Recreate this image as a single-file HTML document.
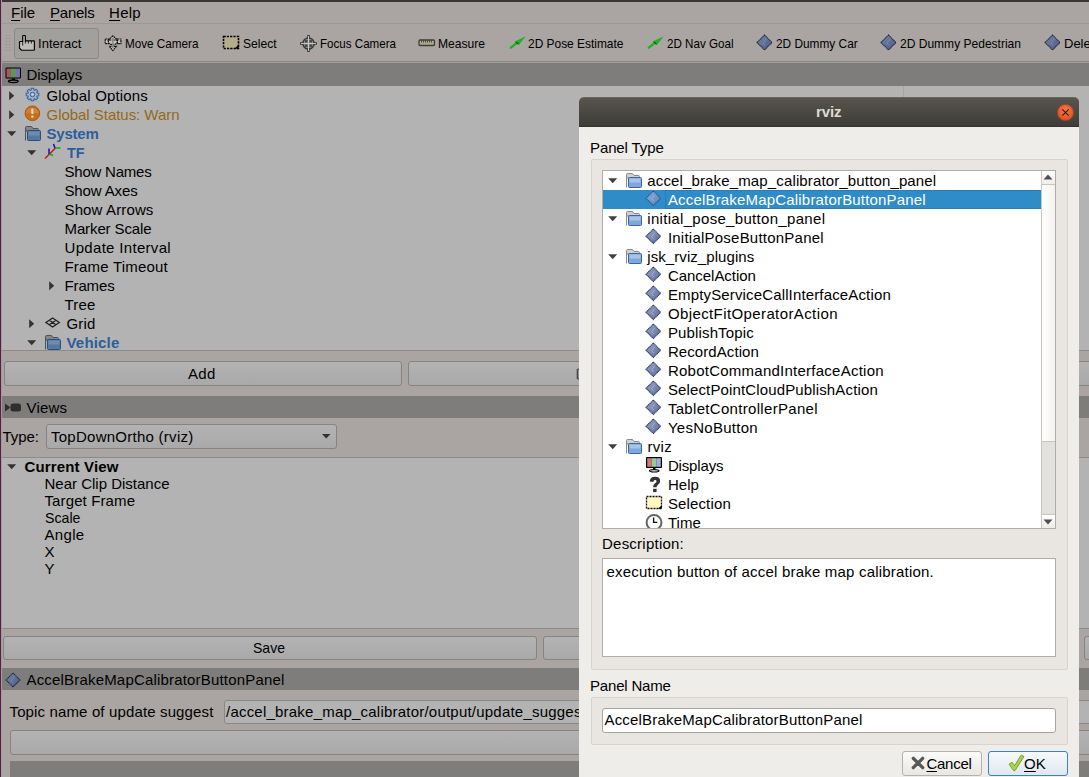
<!DOCTYPE html>
<html><head><meta charset="utf-8"><style>
html,body{margin:0;padding:0;width:1089px;height:777px;overflow:hidden;position:relative;background:#b3b3b3;font-family:'Liberation Sans', sans-serif;}
div{box-sizing:border-box;}
svg{position:absolute;overflow:visible}
</style></head><body>
<div style="position:absolute;left:0px;top:0px;width:1089px;height:2px;background:#383734"></div>
<div style="position:absolute;left:0px;top:2px;width:1089px;height:21px;background:#aaa5a2"></div>
<div style="position:absolute;left:0px;top:23px;width:1089px;height:1px;background:#9c9994"></div>
<div style="position:absolute;left:0px;top:24px;width:1089px;height:37px;background:#aaa5a2"></div>
<div style="position:absolute;left:0px;top:61px;width:1089px;height:1px;background:#8a8783"></div>
<div style="position:absolute;left:0px;top:62px;width:1089px;height:1px;background:#a39f9a"></div>
<div style="position:absolute;left:0px;top:0px;width:1px;height:777px;background:#5c1a45"></div>
<div style="position:absolute;left:1px;top:0px;width:1px;height:777px;background:#a09e9b"></div>
<div style="position:absolute;left:11.00px;top:5.25px;font-size:15px;line-height:15px;font-weight:400;color:#000;letter-spacing:-0.043px;white-space:pre;"><u style="text-decoration:underline;text-underline-offset:2px">F</u>ile</div>
<div style="position:absolute;left:50.00px;top:5.25px;font-size:15px;line-height:15px;font-weight:400;color:#000;letter-spacing:-0.229px;white-space:pre;"><u style="text-decoration:underline;text-underline-offset:2px">P</u>anels</div>
<div style="position:absolute;left:109.00px;top:5.25px;font-size:15px;line-height:15px;font-weight:400;color:#000;letter-spacing:0.285px;white-space:pre;"><u style="text-decoration:underline;text-underline-offset:2px">H</u>elp</div>
<div style="position:absolute;left:6px;top:35px;width:1px;height:1px;background:#8d8a86"></div>
<div style="position:absolute;left:9px;top:35px;width:1px;height:1px;background:#8d8a86"></div>
<div style="position:absolute;left:6px;top:38px;width:1px;height:1px;background:#8d8a86"></div>
<div style="position:absolute;left:9px;top:38px;width:1px;height:1px;background:#8d8a86"></div>
<div style="position:absolute;left:6px;top:41px;width:1px;height:1px;background:#8d8a86"></div>
<div style="position:absolute;left:9px;top:41px;width:1px;height:1px;background:#8d8a86"></div>
<div style="position:absolute;left:6px;top:44px;width:1px;height:1px;background:#8d8a86"></div>
<div style="position:absolute;left:9px;top:44px;width:1px;height:1px;background:#8d8a86"></div>
<div style="position:absolute;left:6px;top:47px;width:1px;height:1px;background:#8d8a86"></div>
<div style="position:absolute;left:9px;top:47px;width:1px;height:1px;background:#8d8a86"></div>
<div style="position:absolute;left:6px;top:50px;width:1px;height:1px;background:#8d8a86"></div>
<div style="position:absolute;left:9px;top:50px;width:1px;height:1px;background:#8d8a86"></div>
<div style="position:absolute;left:14px;top:28px;width:85px;height:31px;background:#a2a09d;border:1px solid #8a8784;border-radius:3px"></div>
<div style="position:absolute;left:38.00px;top:36.95px;font-size:13px;line-height:13px;font-weight:400;color:#000;letter-spacing:0.018px;white-space:pre;">Interact</div>
<div style="position:absolute;left:124.50px;top:36.95px;font-size:13px;line-height:13px;font-weight:400;color:#000;letter-spacing:0.000px;white-space:pre;transform:scaleX(0.9003);transform-origin:0 0;">Move Camera</div>
<div style="position:absolute;left:242.50px;top:36.95px;font-size:13px;line-height:13px;font-weight:400;color:#000;letter-spacing:0.000px;white-space:pre;transform:scaleX(0.9297);transform-origin:0 0;">Select</div>
<div style="position:absolute;left:320.00px;top:36.95px;font-size:13px;line-height:13px;font-weight:400;color:#000;letter-spacing:0.000px;white-space:pre;transform:scaleX(0.8915);transform-origin:0 0;">Focus Camera</div>
<div style="position:absolute;left:438.00px;top:36.95px;font-size:13px;line-height:13px;font-weight:400;color:#000;letter-spacing:0.000px;white-space:pre;transform:scaleX(0.9293);transform-origin:0 0;">Measure</div>
<div style="position:absolute;left:528.00px;top:36.95px;font-size:13px;line-height:13px;font-weight:400;color:#000;letter-spacing:0.000px;white-space:pre;transform:scaleX(0.9169);transform-origin:0 0;">2D Pose Estimate</div>
<div style="position:absolute;left:666.50px;top:36.95px;font-size:13px;line-height:13px;font-weight:400;color:#000;letter-spacing:0.000px;white-space:pre;transform:scaleX(0.8936);transform-origin:0 0;">2D Nav Goal</div>
<div style="position:absolute;left:776.00px;top:36.95px;font-size:13px;line-height:13px;font-weight:400;color:#000;letter-spacing:0.000px;white-space:pre;transform:scaleX(0.9121);transform-origin:0 0;">2D Dummy Car</div>
<div style="position:absolute;left:900.00px;top:36.95px;font-size:13px;line-height:13px;font-weight:400;color:#000;letter-spacing:0.000px;white-space:pre;transform:scaleX(0.9252);transform-origin:0 0;">2D Dummy Pedestrian</div>
<div style="position:absolute;left:1064.00px;top:36.95px;font-size:13px;line-height:13px;font-weight:400;color:#000;letter-spacing:0.000px;white-space:pre;">Delete All Objects</div>
<div style="position:absolute;left:2px;top:63px;width:1087px;height:23px;background:#7f7d7b"></div>
<div style="position:absolute;left:26.50px;top:67.25px;font-size:15px;line-height:15px;font-weight:400;color:#000;letter-spacing:-0.136px;white-space:pre;">Displays</div>
<div style="position:absolute;left:2px;top:86px;width:1087px;height:264px;background:#b3b3b3"></div>
<div style="position:absolute;left:903px;top:86px;width:1px;height:264px;background:#a5a5a5"></div>
<div style="position:absolute;left:2px;top:350px;width:1087px;height:1px;background:#8c8b89"></div>
<div style="position:absolute;left:2px;top:351px;width:1087px;height:45px;background:#aaa5a2"></div>
<div style="position:absolute;left:4px;top:361px;width:398px;height:25px;background:linear-gradient(#b3b3b3,#a9a9a9);border:1px solid #858480;border-radius:3px"></div>
<div style="position:absolute;left:408px;top:361px;width:398px;height:25px;background:linear-gradient(#b3b3b3,#a9a9a9);border:1px solid #858480;border-radius:3px"></div>
<div style="position:absolute;left:812px;top:361px;width:398px;height:25px;background:linear-gradient(#b3b3b3,#a9a9a9);border:1px solid #858480;border-radius:3px"></div>
<div style="position:absolute;left:188.00px;top:366.25px;font-size:15px;line-height:15px;font-weight:400;color:#000;letter-spacing:0.266px;white-space:pre;">Add</div>
<div style="position:absolute;left:46.50px;top:88.25px;font-size:15px;line-height:15px;font-weight:400;color:#000;letter-spacing:0.162px;white-space:pre;">Global Options</div>
<div style="position:absolute;left:46.50px;top:107.25px;font-size:15px;line-height:15px;font-weight:400;color:#94691a;letter-spacing:-0.035px;white-space:pre;">Global Status: Warn</div>
<div style="position:absolute;left:46.50px;top:126.25px;font-size:15px;line-height:15px;font-weight:700;color:#2c5d9c;letter-spacing:-0.229px;white-space:pre;">System</div>
<div style="position:absolute;left:67.00px;top:145.25px;font-size:15px;line-height:15px;font-weight:700;color:#2c5d9c;letter-spacing:0.000px;white-space:pre;transform:scaleX(0.9548);transform-origin:0 0;">TF</div>
<div style="position:absolute;left:64.50px;top:164.25px;font-size:15px;line-height:15px;font-weight:400;color:#000;letter-spacing:-0.220px;white-space:pre;">Show Names</div>
<div style="position:absolute;left:64.50px;top:183.25px;font-size:15px;line-height:15px;font-weight:400;color:#000;letter-spacing:-0.135px;white-space:pre;">Show Axes</div>
<div style="position:absolute;left:64.50px;top:202.25px;font-size:15px;line-height:15px;font-weight:400;color:#000;letter-spacing:0.132px;white-space:pre;">Show Arrows</div>
<div style="position:absolute;left:64.50px;top:221.25px;font-size:15px;line-height:15px;font-weight:400;color:#000;letter-spacing:-0.113px;white-space:pre;">Marker Scale</div>
<div style="position:absolute;left:64.50px;top:240.25px;font-size:15px;line-height:15px;font-weight:400;color:#000;letter-spacing:0.318px;white-space:pre;">Update Interval</div>
<div style="position:absolute;left:64.50px;top:259.25px;font-size:15px;line-height:15px;font-weight:400;color:#000;letter-spacing:0.202px;white-space:pre;">Frame Timeout</div>
<div style="position:absolute;left:64.50px;top:278.25px;font-size:15px;line-height:15px;font-weight:400;color:#000;letter-spacing:-0.141px;white-space:pre;">Frames</div>
<div style="position:absolute;left:64.50px;top:297.25px;font-size:15px;line-height:15px;font-weight:400;color:#000;letter-spacing:0.176px;white-space:pre;">Tree</div>
<div style="position:absolute;left:66.50px;top:316.25px;font-size:15px;line-height:15px;font-weight:400;color:#000;letter-spacing:0.164px;white-space:pre;">Grid</div>
<div style="position:absolute;left:66.50px;top:335.25px;font-size:15px;line-height:15px;font-weight:700;color:#2c5d9c;letter-spacing:0.185px;white-space:pre;">Vehicle</div>
<div style="position:absolute;left:2px;top:396px;width:1087px;height:22px;background:#7f7d7b"></div>
<div style="position:absolute;left:26.50px;top:400.25px;font-size:15px;line-height:15px;font-weight:400;color:#000;letter-spacing:0.190px;white-space:pre;">Views</div>
<div style="position:absolute;left:2px;top:418px;width:1087px;height:39px;background:#aaa5a2"></div>
<div style="position:absolute;left:2.50px;top:429.25px;font-size:15px;line-height:15px;font-weight:400;color:#000;letter-spacing:-0.037px;white-space:pre;">Type:</div>
<div style="position:absolute;left:46px;top:424px;width:291px;height:25px;background:linear-gradient(#b3b3b3,#a9a9a9);border:1px solid #858480;border-radius:3px"></div>
<div style="position:absolute;left:51.00px;top:429.25px;font-size:15px;line-height:15px;font-weight:400;color:#000;letter-spacing:0.261px;white-space:pre;">TopDownOrtho (rviz)</div>
<div style="position:absolute;left:2px;top:457px;width:1087px;height:1px;background:#8c8b89"></div>
<div style="position:absolute;left:2px;top:458px;width:1087px;height:170px;background:#b3b3b3"></div>
<div style="position:absolute;left:24.50px;top:459.25px;font-size:15px;line-height:15px;font-weight:700;color:#000;letter-spacing:0.146px;white-space:pre;">Current View</div>
<div style="position:absolute;left:44.50px;top:476.25px;font-size:15px;line-height:15px;font-weight:400;color:#000;letter-spacing:-0.003px;white-space:pre;">Near Clip Distance</div>
<div style="position:absolute;left:44.50px;top:493.25px;font-size:15px;line-height:15px;font-weight:400;color:#000;letter-spacing:0.116px;white-space:pre;">Target Frame</div>
<div style="position:absolute;left:44.50px;top:510.25px;font-size:15px;line-height:15px;font-weight:400;color:#000;letter-spacing:0.000px;white-space:pre;transform:scaleX(0.9432);transform-origin:0 0;">Scale</div>
<div style="position:absolute;left:44.50px;top:527.25px;font-size:15px;line-height:15px;font-weight:400;color:#000;letter-spacing:0.325px;white-space:pre;">Angle</div>
<div style="position:absolute;left:44.50px;top:544.25px;font-size:15px;line-height:15px;font-weight:400;color:#000;letter-spacing:0.000px;white-space:pre;">X</div>
<div style="position:absolute;left:44.50px;top:561.25px;font-size:15px;line-height:15px;font-weight:400;color:#000;letter-spacing:0.000px;white-space:pre;">Y</div>
<div style="position:absolute;left:2px;top:628px;width:1087px;height:1px;background:#8c8b89"></div>
<div style="position:absolute;left:2px;top:629px;width:1087px;height:39px;background:#aaa5a2"></div>
<div style="position:absolute;left:3px;top:636px;width:534px;height:24px;background:linear-gradient(#b3b3b3,#a9a9a9);border:1px solid #858480;border-radius:3px"></div>
<div style="position:absolute;left:543px;top:636px;width:534px;height:24px;background:linear-gradient(#b3b3b3,#a9a9a9);border:1px solid #858480;border-radius:3px"></div>
<div style="position:absolute;left:1084px;top:636px;width:534px;height:24px;background:linear-gradient(#b3b3b3,#a9a9a9);border:1px solid #858480;border-radius:3px"></div>
<div style="position:absolute;left:253.00px;top:640.25px;font-size:15px;line-height:15px;font-weight:400;color:#000;letter-spacing:0.000px;white-space:pre;transform:scaleX(0.9356);transform-origin:0 0;">Save</div>
<div style="position:absolute;left:2px;top:668px;width:1087px;height:22px;background:#7f7d7b"></div>
<div style="position:absolute;left:26.50px;top:672.25px;font-size:15px;line-height:15px;font-weight:400;color:#000;letter-spacing:0.182px;white-space:pre;">AccelBrakeMapCalibratorButtonPanel</div>
<div style="position:absolute;left:2px;top:690px;width:1087px;height:87px;background:#aaa5a2"></div>
<div style="position:absolute;left:9.50px;top:704.25px;font-size:15px;line-height:15px;font-weight:400;color:#000;letter-spacing:0.138px;white-space:pre;">Topic name of update suggest</div>
<div style="position:absolute;left:224px;top:700px;width:876px;height:24px;background:#b3b3b3;border:1px solid #8a8884;border-radius:3px"></div>
<div style="position:absolute;left:226.00px;top:704.25px;font-size:15px;line-height:15px;font-weight:400;color:#000;letter-spacing:0.216px;white-space:pre;">/accel_brake_map_calibrator/output/update_suggest</div>
<div style="position:absolute;left:10px;top:730px;width:1090px;height:25px;background:linear-gradient(#b3b3b3,#a9a9a9);border:1px solid #858480;border-radius:3px"></div>
<div style="position:absolute;left:10px;top:761px;width:1090px;height:16px;background:#7f7d7b"></div>
<div style="position:absolute;left:579px;top:126px;width:500px;height:651px;background:#efedea"></div>
<div style="position:absolute;left:579px;top:97px;width:500px;height:30px;background:linear-gradient(#57544d,#3d3c38);border-top:1px solid #6a675e;border-radius:5px 5px 0 0"></div>
<div style="position:absolute;left:579px;top:126px;width:500px;height:1px;background:#33322f"></div>
<div style="position:absolute;left:816.00px;top:104.25px;font-size:15px;line-height:15px;font-weight:700;color:#dfdbd2;letter-spacing:-0.115px;white-space:pre;">rviz</div>
<div style="position:absolute;left:1057px;top:104px;width:17px;height:17px;border-radius:50%;background:radial-gradient(circle at 50% 35%,#f47a4a,#d9481c);border:1px solid #b8451f"></div>
<svg style="left:1061px;top:108px" width="9" height="9"><path d="M1.3 1.3L7.7 7.7M7.7 1.3L1.3 7.7" stroke="#3a1608" stroke-width="1.1"/></svg>
<div style="position:absolute;left:590.00px;top:140.25px;font-size:15px;line-height:15px;font-weight:400;color:#000;letter-spacing:-0.108px;white-space:pre;">Panel Type</div>
<div style="position:absolute;left:591px;top:159px;width:477px;height:511px;background:#e9e6e2;border:1px solid #d7d4d0;border-radius:2px"></div>
<div style="position:absolute;left:602px;top:170px;width:454px;height:359px;background:#fff;border:1px solid #b0aca8"></div>
<div style="position:absolute;left:603px;top:190px;width:439px;height:19px;background:#308cc6"></div>
<div style="position:absolute;left:665px;top:190px;width:377px;height:19px;border:1px solid #2a7cb6;border-right:none"></div>
<div style="position:absolute;left:603px;top:171px;width:438px;height:357px;overflow:hidden">
<div style="position:absolute;left:44.30px;top:2.25px;font-size:15px;line-height:15px;font-weight:400;color:#000;letter-spacing:0.140px;white-space:pre;">accel_brake_map_calibrator_button_panel</div>
<div style="position:absolute;left:64.90px;top:21.25px;font-size:15px;line-height:15px;font-weight:400;color:#ffffff;letter-spacing:0.182px;white-space:pre;">AccelBrakeMapCalibratorButtonPanel</div>
<div style="position:absolute;left:44.30px;top:40.25px;font-size:15px;line-height:15px;font-weight:400;color:#000;letter-spacing:0.314px;white-space:pre;">initial_pose_button_panel</div>
<div style="position:absolute;left:64.90px;top:59.25px;font-size:15px;line-height:15px;font-weight:400;color:#000;letter-spacing:0.230px;white-space:pre;">InitialPoseButtonPanel</div>
<div style="position:absolute;left:44.30px;top:78.25px;font-size:15px;line-height:15px;font-weight:400;color:#000;letter-spacing:0.069px;white-space:pre;">jsk_rviz_plugins</div>
<div style="position:absolute;left:64.90px;top:97.25px;font-size:15px;line-height:15px;font-weight:400;color:#000;letter-spacing:-0.033px;white-space:pre;">CancelAction</div>
<div style="position:absolute;left:64.90px;top:116.25px;font-size:15px;line-height:15px;font-weight:400;color:#000;letter-spacing:0.147px;white-space:pre;">EmptyServiceCallInterfaceAction</div>
<div style="position:absolute;left:64.90px;top:135.25px;font-size:15px;line-height:15px;font-weight:400;color:#000;letter-spacing:0.395px;white-space:pre;">ObjectFitOperatorAction</div>
<div style="position:absolute;left:64.90px;top:154.25px;font-size:15px;line-height:15px;font-weight:400;color:#000;letter-spacing:0.148px;white-space:pre;">PublishTopic</div>
<div style="position:absolute;left:64.90px;top:173.25px;font-size:15px;line-height:15px;font-weight:400;color:#000;letter-spacing:0.079px;white-space:pre;">RecordAction</div>
<div style="position:absolute;left:64.90px;top:192.25px;font-size:15px;line-height:15px;font-weight:400;color:#000;letter-spacing:0.249px;white-space:pre;">RobotCommandInterfaceAction</div>
<div style="position:absolute;left:64.90px;top:211.25px;font-size:15px;line-height:15px;font-weight:400;color:#000;letter-spacing:0.139px;white-space:pre;">SelectPointCloudPublishAction</div>
<div style="position:absolute;left:64.90px;top:230.25px;font-size:15px;line-height:15px;font-weight:400;color:#000;letter-spacing:0.313px;white-space:pre;">TabletControllerPanel</div>
<div style="position:absolute;left:64.90px;top:249.25px;font-size:15px;line-height:15px;font-weight:400;color:#000;letter-spacing:0.271px;white-space:pre;">YesNoButton</div>
<div style="position:absolute;left:44.50px;top:268.25px;font-size:15px;line-height:15px;font-weight:400;color:#000;letter-spacing:0.293px;white-space:pre;">rviz</div>
<div style="position:absolute;left:64.90px;top:287.25px;font-size:15px;line-height:15px;font-weight:400;color:#000;letter-spacing:-0.148px;white-space:pre;">Displays</div>
<div style="position:absolute;left:64.90px;top:306.25px;font-size:15px;line-height:15px;font-weight:400;color:#000;letter-spacing:0.035px;white-space:pre;">Help</div>
<div style="position:absolute;left:64.90px;top:325.25px;font-size:15px;line-height:15px;font-weight:400;color:#000;letter-spacing:0.142px;white-space:pre;">Selection</div>
<div style="position:absolute;left:64.90px;top:344.25px;font-size:15px;line-height:15px;font-weight:400;color:#000;letter-spacing:0.055px;white-space:pre;">Time</div>
</div>
<div style="position:absolute;left:1041px;top:171px;width:14px;height:357px;background:#e3e1de;border-left:1px solid #c9c6c2"></div>
<div style="position:absolute;left:1042px;top:171px;width:13px;height:14px;background:linear-gradient(#ffffff,#eeece9);border-bottom:1px solid #c9c6c2"></div>
<div style="position:absolute;left:1042px;top:185px;width:13px;height:257px;background:linear-gradient(90deg,#ffffff,#f3f2f0);border-bottom:1px solid #c9c6c2"></div>
<div style="position:absolute;left:1042px;top:514px;width:13px;height:14px;background:linear-gradient(#ffffff,#eeece9);border-top:1px solid #c9c6c2"></div>
<svg style="left:1042px;top:173px" width="12" height="8"><path d="M1.5 6.5L6 1.5L10.5 6.5Z" fill="#505050"/></svg>
<svg style="left:1042px;top:518px" width="12" height="8"><path d="M1.5 1.5L6 6.5L10.5 1.5Z" fill="#505050"/></svg>
<div style="position:absolute;left:602.00px;top:536.25px;font-size:15px;line-height:15px;font-weight:400;color:#000;letter-spacing:0.233px;white-space:pre;">Description:</div>
<div style="position:absolute;left:602px;top:558px;width:454px;height:99px;background:#fff;border:1px solid #b0aca8"></div>
<div style="position:absolute;left:606.50px;top:564.25px;font-size:15px;line-height:15px;font-weight:400;color:#000;letter-spacing:0.204px;white-space:pre;">execution button of accel brake map calibration.</div>
<div style="position:absolute;left:590.00px;top:678.25px;font-size:15px;line-height:15px;font-weight:400;color:#000;letter-spacing:-0.185px;white-space:pre;">Panel Name</div>
<div style="position:absolute;left:591px;top:697px;width:477px;height:48px;background:#e9e6e2;border:1px solid #d7d4d0;border-radius:2px"></div>
<div style="position:absolute;left:602px;top:708px;width:454px;height:25px;background:#fff;border:1px solid #a9a5a0;border-radius:3px"></div>
<div style="position:absolute;left:604.50px;top:712.25px;font-size:15px;line-height:15px;font-weight:400;color:#000;letter-spacing:0.182px;white-space:pre;">AccelBrakeMapCalibratorButtonPanel</div>
<div style="position:absolute;left:902px;top:751px;width:80px;height:25px;background:linear-gradient(#fbfbfa,#e9e7e4);border:1px solid #b5b1ac;border-radius:3px"></div>
<div style="position:absolute;left:926.50px;top:756.25px;font-size:15px;line-height:15px;font-weight:400;color:#000;letter-spacing:-0.284px;white-space:pre;"><u style="text-decoration:underline;text-underline-offset:2px">C</u>ancel</div>
<div style="position:absolute;left:988px;top:751px;width:80px;height:25px;background:linear-gradient(#f6f9fc,#dfe7ef);border:1px solid #3b7fc4;border-radius:3px"></div>
<div style="position:absolute;left:1024.00px;top:756.25px;font-size:15px;line-height:15px;font-weight:400;color:#000;letter-spacing:0.156px;white-space:pre;"><u style="text-decoration:underline;text-underline-offset:2px">O</u>K</div>
<svg style="left:18px;top:34px" width="18" height="18" viewBox="0 0 18 18"><path d="M4.7 7.5V2Q4.7 1.5 5.2 1.5H6.9Q7.4 1.5 7.4 2V6.9H15.9Q16.4 6.9 16.4 7.4V15.7L15.9 16.2H3.5L1.5 14.2V8Q1.5 7.5 2 7.5Z" fill="#bdbdbb" stroke="#000" stroke-width="1.15"/>
<path d="M4.7 7.5V11.5M7.4 6.9V9.5M10.4 6.9V9.5M13.4 6.9V9.5" stroke="#111" stroke-width="0.9"/></svg>
<svg style="left:104px;top:35px" width="18" height="17" viewBox="0 0 18 17"><g fill="#c4c4c2" stroke="#151515" stroke-width="1.2" stroke-dasharray="1.8 0.5">
<ellipse cx="8.9" cy="6.6" rx="4.6" ry="3.1"/>
<rect x="1.2" y="4" width="3.2" height="4.7"/><rect x="13.4" y="4" width="3.5" height="4.7"/>
<path d="M8.9 0.9L4.4 5H13.4Z"/><path d="M5.4 11.4H12.4L8.9 15.6Z"/></g>
<path d="M8.9 3V13" stroke="#8a8a8a" stroke-width="1.6"/></svg>
<svg style="left:222px;top:35px" width="18" height="15" viewBox="0 0 18 15"><rect x="1.5" y="1.5" width="15" height="12" fill="#b3ae89" stroke="#000" stroke-width="1.6" stroke-dasharray="2.2 1.1"/>
<path d="M16.8 9.5V13.8H12.5Z" fill="#000"/></svg>
<svg style="left:299px;top:34px" width="19" height="19" viewBox="0 0 19 19"><path d="M9.5 1V18M1 9.5H18" stroke="#3a3a3a" stroke-width="2.6"/>
<circle cx="9.5" cy="9.5" r="5.6" fill="#8c8c8a" stroke="#3a3a3a" stroke-width="1.5"/>
<rect x="6" y="6" width="2.5" height="2.5" fill="#4a4a4a"/><rect x="10.5" y="6" width="2.5" height="2.5" fill="#4a4a4a"/>
<rect x="6" y="10.5" width="2.5" height="2.5" fill="#4a4a4a"/><rect x="10.5" y="10.5" width="2.5" height="2.5" fill="#4a4a4a"/>
<path d="M9.5 2V17M2 9.5H17" stroke="#cfcfcd" stroke-width="0.9"/></svg>
<svg style="left:418px;top:39px" width="18" height="8" viewBox="0 0 18 8"><rect x="1" y="1" width="15.5" height="5.5" rx="1" fill="#b0ab84" stroke="#3d3d3d" stroke-width="1.3"/>
<path d="M3.5 1.5V3.5M5.5 1.5V3.5M7.5 1.5V3.5M9.5 1.5V3.5M11.5 1.5V3.5M13.5 1.5V3.5" stroke="#3d3d3d" stroke-width="0.9"/></svg>
<svg style="left:509px;top:35px" width="18" height="15" viewBox="0 0 18 15"><path d="M1.8 12.6L8 7.8" stroke="#1db322" stroke-width="2.4" stroke-linecap="round"/>
<path d="M16.8 1.2L6.3 6.3L10 9.8Z" fill="#1db322"/><path d="M6.6 6.6L9.6 9.4" stroke="#0c5c10" stroke-width="1.2"/></svg>
<svg style="left:647px;top:35px" width="18" height="15" viewBox="0 0 18 15"><path d="M1.8 12.6L8 7.8" stroke="#1db322" stroke-width="2.4" stroke-linecap="round"/>
<path d="M16.8 1.2L6.3 6.3L10 9.8Z" fill="#1db322"/><path d="M6.6 6.6L9.6 9.4" stroke="#0c5c10" stroke-width="1.2"/></svg>
<svg style="left:756.0px;top:34.0px" width="17.0" height="17.0" viewBox="0 0 17.0 17.0"><defs><linearGradient id="dg1" x1="0" y1="0" x2="1" y2="1"><stop offset="0" stop-color="#7888aa"/><stop offset="1" stop-color="#4a5a80"/></linearGradient></defs>
<path d="M8.5 1L16.0 8.5L8.5 16.0L1 8.5Z" fill="url(#dg1)" stroke="#1f2a4a" stroke-width="1.1" stroke-dasharray="1.3 0.5"/>
<path d="M10.0 5.0L7.0 9.0L9.0 11.5" fill="none" stroke="#8a9abb" stroke-width="0.9" opacity="0.6"/></svg>
<svg style="left:880.0px;top:34.0px" width="17.0" height="17.0" viewBox="0 0 17.0 17.0"><defs><linearGradient id="dg2" x1="0" y1="0" x2="1" y2="1"><stop offset="0" stop-color="#7888aa"/><stop offset="1" stop-color="#4a5a80"/></linearGradient></defs>
<path d="M8.5 1L16.0 8.5L8.5 16.0L1 8.5Z" fill="url(#dg2)" stroke="#1f2a4a" stroke-width="1.1" stroke-dasharray="1.3 0.5"/>
<path d="M10.0 5.0L7.0 9.0L9.0 11.5" fill="none" stroke="#8a9abb" stroke-width="0.9" opacity="0.6"/></svg>
<svg style="left:1044.0px;top:34.0px" width="17.0" height="17.0" viewBox="0 0 17.0 17.0"><defs><linearGradient id="dg3" x1="0" y1="0" x2="1" y2="1"><stop offset="0" stop-color="#7888aa"/><stop offset="1" stop-color="#4a5a80"/></linearGradient></defs>
<path d="M8.5 1L16.0 8.5L8.5 16.0L1 8.5Z" fill="url(#dg3)" stroke="#1f2a4a" stroke-width="1.1" stroke-dasharray="1.3 0.5"/>
<path d="M10.0 5.0L7.0 9.0L9.0 11.5" fill="none" stroke="#8a9abb" stroke-width="0.9" opacity="0.6"/></svg>
<svg style="left:4px;top:66px" width="19" height="18" viewBox="0 0 19 18"><rect x="1.5" y="1.5" width="15.5" height="11" rx="1" fill="#000"/>
<rect x="2.5" y="2.5" width="4.5" height="9" fill="#a25b5b"/><rect x="7" y="2.5" width="5" height="9" fill="#5d955d"/><rect x="12" y="2.5" width="4" height="9" fill="#7474b0"/>
<path d="M8 12.5H11V14H8Z" fill="#000"/><ellipse cx="9.3" cy="15.3" rx="4.8" ry="1.3" fill="none" stroke="#000" stroke-width="1.3"/></svg>
<svg style="left:9px;top:90.5px" width="6" height="10" viewBox="0 0 6 10"><path d="M0.2 0.2L5.2 4.7L0.2 9.2Z" fill="#333"/></svg>
<svg style="left:9px;top:109.5px" width="6" height="10" viewBox="0 0 6 10"><path d="M0.2 0.2L5.2 4.7L0.2 9.2Z" fill="#333"/></svg>
<svg style="left:7px;top:131px" width="10" height="6" viewBox="0 0 10 6"><path d="M0.2 0.2H9.2L4.7 5.2Z" fill="#333"/></svg>
<svg style="left:27px;top:150px" width="10" height="6" viewBox="0 0 10 6"><path d="M0.2 0.2H9.2L4.7 5.2Z" fill="#333"/></svg>
<svg style="left:49px;top:280.5px" width="6" height="10" viewBox="0 0 6 10"><path d="M0.2 0.2L5.2 4.7L0.2 9.2Z" fill="#333"/></svg>
<svg style="left:29px;top:318.5px" width="6" height="10" viewBox="0 0 6 10"><path d="M0.2 0.2L5.2 4.7L0.2 9.2Z" fill="#333"/></svg>
<svg style="left:27px;top:340px" width="10" height="6" viewBox="0 0 10 6"><path d="M0.2 0.2H9.2L4.7 5.2Z" fill="#333"/></svg>
<svg style="left:25px;top:87px" width="15" height="15" viewBox="0 0 15 15"><path d="M13.77 6.23L13.77 8.77L11.99 8.89L11.66 9.69L12.83 11.04L11.04 12.83L9.69 11.66L8.89 11.99L8.77 13.77L6.23 13.77L6.11 11.99L5.31 11.66L3.96 12.83L2.17 11.04L3.34 9.69L3.01 8.89L1.23 8.77L1.23 6.23L3.01 6.11L3.34 5.31L2.17 3.96L3.96 2.17L5.31 3.34L6.11 3.01L6.23 1.23L8.77 1.23L8.89 3.01L9.69 3.34L11.04 2.17L12.83 3.96L11.66 5.31L11.99 6.11Z" fill="#a7b2c2" stroke="#3466a8" stroke-width="1.05" stroke-linejoin="miter"/><circle cx="7.5" cy="7.5" r="2.3" fill="none" stroke="#3466a8" stroke-width="1.0"/><circle cx="7.5" cy="7.5" r="0.8" fill="#e0e4ea"/></svg>
<svg style="left:24px;top:105px" width="17" height="17" viewBox="0 0 17 17"><circle cx="8.4" cy="8.3" r="7.3" fill="#c66d1a" stroke="#b0520a" stroke-width="1"/>
<path d="M1.5 8.3A7 7 0 0 1 15.3 8.3" fill="#d48a4a" opacity="0.6"/>
<rect x="7.3" y="3.5" width="2.2" height="5.5" rx="0.6" fill="#f0d5bb"/><rect x="7.3" y="10.5" width="2.2" height="2.2" fill="#f0d5bb"/></svg>
<svg style="left:25px;top:126px" width="17" height="16" viewBox="0 0 17 16"><path d="M0.5 14.5V1.5Q0.5 0.5 1.5 0.5H6.5L8 2.5H12.5Q13.5 2.5 13.5 3.5V5H0.5" fill="#858585" stroke="#505050" stroke-width="1"/>
<rect x="2.5" y="4.5" width="13" height="10" rx="1" fill="#56779f" stroke="#27507f" stroke-width="1"/>
<rect x="3.5" y="5.5" width="11" height="4" fill="#7391b5" opacity="0.8"/></svg>
<svg style="left:44px;top:143px" width="18" height="17" viewBox="0 0 18 17"><path d="M1 15.5L11.5 5" stroke="#d01010" stroke-width="1.5"/>
<path d="M11.5 5H16.5" stroke="#10b010" stroke-width="1.5"/><path d="M5.5 11L9 12.5" stroke="#10b010" stroke-width="1.5"/>
<path d="M9.5 1L11 5" stroke="#1010c0" stroke-width="1.5"/><path d="M5 5.5V11" stroke="#1010c0" stroke-width="1.5"/></svg>
<svg style="left:45px;top:317px" width="16" height="11" viewBox="0 0 16 11"><path d="M7.6 1L14.3 5.5L7.6 10L0.9 5.5Z M4.25 3.25L10.95 7.75 M10.95 3.25L4.25 7.75" fill="none" stroke="#1e1e1e" stroke-width="1.2"/></svg>
<svg style="left:45px;top:335px" width="17" height="16" viewBox="0 0 17 16"><path d="M0.5 14.5V1.5Q0.5 0.5 1.5 0.5H6.5L8 2.5H12.5Q13.5 2.5 13.5 3.5V5H0.5" fill="#858585" stroke="#505050" stroke-width="1"/>
<rect x="2.5" y="4.5" width="13" height="10" rx="1" fill="#56779f" stroke="#27507f" stroke-width="1"/>
<rect x="3.5" y="5.5" width="11" height="4" fill="#7391b5" opacity="0.8"/></svg>
<svg style="left:4px;top:403px" width="18" height="10" viewBox="0 0 18 10"><path d="M1 0.5L6.5 4.5L1 8.5Z" fill="#2e2e2e"/><rect x="6.5" y="0.5" width="10.5" height="8" rx="2.5" fill="#2e2e2e"/></svg>
<svg style="left:322px;top:434px" width="9" height="5" viewBox="0 0 9 5"><path d="M0 0H8.5L4.25 4.5Z" fill="#333"/></svg>
<svg style="left:7px;top:464px" width="10" height="6" viewBox="0 0 10 6"><path d="M0.2 0.2H9.2L4.7 5.2Z" fill="#333"/></svg>
<svg style="left:4.5px;top:671.5px" width="16" height="16" viewBox="0 0 16 16"><defs><linearGradient id="dg4" x1="0" y1="0" x2="1" y2="1"><stop offset="0" stop-color="#7888aa"/><stop offset="1" stop-color="#4a5a80"/></linearGradient></defs>
<path d="M8 1L15 8L8 15L1 8Z" fill="url(#dg4)" stroke="#1f2a4a" stroke-width="1.1" stroke-dasharray="1.3 0.5"/>
<path d="M9.5 4.5L6.5 8.5L8.5 11" fill="none" stroke="#8a9abb" stroke-width="0.9" opacity="0.6"/></svg>
<div style="position:absolute;left:603px;top:171px;width:438px;height:357px;overflow:hidden">
<svg style="left:5px;top:7px" width="10" height="6" viewBox="0 0 10 6"><path d="M0.2 0.2H9.2L4.7 5.2Z" fill="#404040"/></svg>
<svg style="left:23px;top:2px" width="17" height="16" viewBox="0 0 17 16"><path d="M0.5 14.5V1.5Q0.5 0.5 1.5 0.5H6.5L8 2.5H12.5Q13.5 2.5 13.5 3.5V5H0.5" fill="#d0d0d0" stroke="#8a8a8a" stroke-width="1"/>
<rect x="2.5" y="4.5" width="13" height="10" rx="1" fill="#7fa7d8" stroke="#3566a8" stroke-width="1"/>
<rect x="3.5" y="5.5" width="11" height="4" fill="#b2ccec" opacity="0.8"/></svg>
<svg style="left:42.200000000000045px;top:19.19999999999999px" width="16.6" height="16.6" viewBox="0 0 16.6 16.6"><defs><linearGradient id="dg5" x1="0" y1="0" x2="1" y2="1"><stop offset="0" stop-color="#8fb0d8"/><stop offset="1" stop-color="#5a80b5"/></linearGradient></defs>
<path d="M8.3 1L15.6 8.3L8.3 15.6L1 8.3Z" fill="url(#dg5)" stroke="#2a5890" stroke-width="1.1" stroke-dasharray="1.3 0.5"/>
<path d="M9.8 4.8L6.8 8.8L8.8 11.3" fill="none" stroke="#a9c3e3" stroke-width="0.9" opacity="0.7"/></svg>
<svg style="left:5px;top:45px" width="10" height="6" viewBox="0 0 10 6"><path d="M0.2 0.2H9.2L4.7 5.2Z" fill="#404040"/></svg>
<svg style="left:23px;top:40px" width="17" height="16" viewBox="0 0 17 16"><path d="M0.5 14.5V1.5Q0.5 0.5 1.5 0.5H6.5L8 2.5H12.5Q13.5 2.5 13.5 3.5V5H0.5" fill="#d0d0d0" stroke="#8a8a8a" stroke-width="1"/>
<rect x="2.5" y="4.5" width="13" height="10" rx="1" fill="#7fa7d8" stroke="#3566a8" stroke-width="1"/>
<rect x="3.5" y="5.5" width="11" height="4" fill="#b2ccec" opacity="0.8"/></svg>
<svg style="left:42.200000000000045px;top:57.19999999999999px" width="16.6" height="16.6" viewBox="0 0 16.6 16.6"><defs><linearGradient id="dg6" x1="0" y1="0" x2="1" y2="1"><stop offset="0" stop-color="#9aa8c8"/><stop offset="1" stop-color="#5b6b95"/></linearGradient></defs>
<path d="M8.3 1L15.6 8.3L8.3 15.6L1 8.3Z" fill="url(#dg6)" stroke="#2c3a66" stroke-width="1.1" stroke-dasharray="1.3 0.5"/>
<path d="M9.8 4.8L6.8 8.8L8.8 11.3" fill="none" stroke="#b7c3de" stroke-width="0.9" opacity="0.7"/></svg>
<svg style="left:5px;top:83px" width="10" height="6" viewBox="0 0 10 6"><path d="M0.2 0.2H9.2L4.7 5.2Z" fill="#404040"/></svg>
<svg style="left:23px;top:78px" width="17" height="16" viewBox="0 0 17 16"><path d="M0.5 14.5V1.5Q0.5 0.5 1.5 0.5H6.5L8 2.5H12.5Q13.5 2.5 13.5 3.5V5H0.5" fill="#d0d0d0" stroke="#8a8a8a" stroke-width="1"/>
<rect x="2.5" y="4.5" width="13" height="10" rx="1" fill="#7fa7d8" stroke="#3566a8" stroke-width="1"/>
<rect x="3.5" y="5.5" width="11" height="4" fill="#b2ccec" opacity="0.8"/></svg>
<svg style="left:42.200000000000045px;top:95.19999999999999px" width="16.6" height="16.6" viewBox="0 0 16.6 16.6"><defs><linearGradient id="dg7" x1="0" y1="0" x2="1" y2="1"><stop offset="0" stop-color="#9aa8c8"/><stop offset="1" stop-color="#5b6b95"/></linearGradient></defs>
<path d="M8.3 1L15.6 8.3L8.3 15.6L1 8.3Z" fill="url(#dg7)" stroke="#2c3a66" stroke-width="1.1" stroke-dasharray="1.3 0.5"/>
<path d="M9.8 4.8L6.8 8.8L8.8 11.3" fill="none" stroke="#b7c3de" stroke-width="0.9" opacity="0.7"/></svg>
<svg style="left:42.200000000000045px;top:114.19999999999999px" width="16.6" height="16.6" viewBox="0 0 16.6 16.6"><defs><linearGradient id="dg8" x1="0" y1="0" x2="1" y2="1"><stop offset="0" stop-color="#9aa8c8"/><stop offset="1" stop-color="#5b6b95"/></linearGradient></defs>
<path d="M8.3 1L15.6 8.3L8.3 15.6L1 8.3Z" fill="url(#dg8)" stroke="#2c3a66" stroke-width="1.1" stroke-dasharray="1.3 0.5"/>
<path d="M9.8 4.8L6.8 8.8L8.8 11.3" fill="none" stroke="#b7c3de" stroke-width="0.9" opacity="0.7"/></svg>
<svg style="left:42.200000000000045px;top:133.2px" width="16.6" height="16.6" viewBox="0 0 16.6 16.6"><defs><linearGradient id="dg9" x1="0" y1="0" x2="1" y2="1"><stop offset="0" stop-color="#9aa8c8"/><stop offset="1" stop-color="#5b6b95"/></linearGradient></defs>
<path d="M8.3 1L15.6 8.3L8.3 15.6L1 8.3Z" fill="url(#dg9)" stroke="#2c3a66" stroke-width="1.1" stroke-dasharray="1.3 0.5"/>
<path d="M9.8 4.8L6.8 8.8L8.8 11.3" fill="none" stroke="#b7c3de" stroke-width="0.9" opacity="0.7"/></svg>
<svg style="left:42.200000000000045px;top:152.2px" width="16.6" height="16.6" viewBox="0 0 16.6 16.6"><defs><linearGradient id="dg10" x1="0" y1="0" x2="1" y2="1"><stop offset="0" stop-color="#9aa8c8"/><stop offset="1" stop-color="#5b6b95"/></linearGradient></defs>
<path d="M8.3 1L15.6 8.3L8.3 15.6L1 8.3Z" fill="url(#dg10)" stroke="#2c3a66" stroke-width="1.1" stroke-dasharray="1.3 0.5"/>
<path d="M9.8 4.8L6.8 8.8L8.8 11.3" fill="none" stroke="#b7c3de" stroke-width="0.9" opacity="0.7"/></svg>
<svg style="left:42.200000000000045px;top:171.2px" width="16.6" height="16.6" viewBox="0 0 16.6 16.6"><defs><linearGradient id="dg11" x1="0" y1="0" x2="1" y2="1"><stop offset="0" stop-color="#9aa8c8"/><stop offset="1" stop-color="#5b6b95"/></linearGradient></defs>
<path d="M8.3 1L15.6 8.3L8.3 15.6L1 8.3Z" fill="url(#dg11)" stroke="#2c3a66" stroke-width="1.1" stroke-dasharray="1.3 0.5"/>
<path d="M9.8 4.8L6.8 8.8L8.8 11.3" fill="none" stroke="#b7c3de" stroke-width="0.9" opacity="0.7"/></svg>
<svg style="left:42.200000000000045px;top:190.2px" width="16.6" height="16.6" viewBox="0 0 16.6 16.6"><defs><linearGradient id="dg12" x1="0" y1="0" x2="1" y2="1"><stop offset="0" stop-color="#9aa8c8"/><stop offset="1" stop-color="#5b6b95"/></linearGradient></defs>
<path d="M8.3 1L15.6 8.3L8.3 15.6L1 8.3Z" fill="url(#dg12)" stroke="#2c3a66" stroke-width="1.1" stroke-dasharray="1.3 0.5"/>
<path d="M9.8 4.8L6.8 8.8L8.8 11.3" fill="none" stroke="#b7c3de" stroke-width="0.9" opacity="0.7"/></svg>
<svg style="left:42.200000000000045px;top:209.2px" width="16.6" height="16.6" viewBox="0 0 16.6 16.6"><defs><linearGradient id="dg13" x1="0" y1="0" x2="1" y2="1"><stop offset="0" stop-color="#9aa8c8"/><stop offset="1" stop-color="#5b6b95"/></linearGradient></defs>
<path d="M8.3 1L15.6 8.3L8.3 15.6L1 8.3Z" fill="url(#dg13)" stroke="#2c3a66" stroke-width="1.1" stroke-dasharray="1.3 0.5"/>
<path d="M9.8 4.8L6.8 8.8L8.8 11.3" fill="none" stroke="#b7c3de" stroke-width="0.9" opacity="0.7"/></svg>
<svg style="left:42.200000000000045px;top:228.2px" width="16.6" height="16.6" viewBox="0 0 16.6 16.6"><defs><linearGradient id="dg14" x1="0" y1="0" x2="1" y2="1"><stop offset="0" stop-color="#9aa8c8"/><stop offset="1" stop-color="#5b6b95"/></linearGradient></defs>
<path d="M8.3 1L15.6 8.3L8.3 15.6L1 8.3Z" fill="url(#dg14)" stroke="#2c3a66" stroke-width="1.1" stroke-dasharray="1.3 0.5"/>
<path d="M9.8 4.8L6.8 8.8L8.8 11.3" fill="none" stroke="#b7c3de" stroke-width="0.9" opacity="0.7"/></svg>
<svg style="left:42.200000000000045px;top:247.2px" width="16.6" height="16.6" viewBox="0 0 16.6 16.6"><defs><linearGradient id="dg15" x1="0" y1="0" x2="1" y2="1"><stop offset="0" stop-color="#9aa8c8"/><stop offset="1" stop-color="#5b6b95"/></linearGradient></defs>
<path d="M8.3 1L15.6 8.3L8.3 15.6L1 8.3Z" fill="url(#dg15)" stroke="#2c3a66" stroke-width="1.1" stroke-dasharray="1.3 0.5"/>
<path d="M9.8 4.8L6.8 8.8L8.8 11.3" fill="none" stroke="#b7c3de" stroke-width="0.9" opacity="0.7"/></svg>
<svg style="left:5px;top:273px" width="10" height="6" viewBox="0 0 10 6"><path d="M0.2 0.2H9.2L4.7 5.2Z" fill="#404040"/></svg>
<svg style="left:23px;top:268px" width="17" height="16" viewBox="0 0 17 16"><path d="M0.5 14.5V1.5Q0.5 0.5 1.5 0.5H6.5L8 2.5H12.5Q13.5 2.5 13.5 3.5V5H0.5" fill="#d0d0d0" stroke="#8a8a8a" stroke-width="1"/>
<rect x="2.5" y="4.5" width="13" height="10" rx="1" fill="#7fa7d8" stroke="#3566a8" stroke-width="1"/>
<rect x="3.5" y="5.5" width="11" height="4" fill="#b2ccec" opacity="0.8"/></svg>
<svg style="left:42px;top:285px" width="18" height="17" viewBox="0 0 18 17"><rect x="1" y="1" width="16" height="11" rx="1" fill="#000"/>
<rect x="2.2" y="2.2" width="4.6" height="8.6" fill="#cc7a7a"/><rect x="6.8" y="2.2" width="4.9" height="8.6" fill="#8fd08f"/><rect x="11.7" y="2.2" width="4.1" height="8.6" fill="#a5a5ea"/>
<path d="M8 12H10.5V13.5H8Z" fill="#000"/><ellipse cx="9.2" cy="14.8" rx="4.8" ry="1.2" fill="none" stroke="#000" stroke-width="1.2"/></svg>
<svg style="left:45px;top:305px" width="14" height="18" viewBox="0 0 14 18"><path d="M1.8 5.6Q1.8 0.8 7 0.8Q12.2 0.8 12.2 5.1Q12.2 7.6 9.8 8.9Q8.6 9.6 8.6 11.2H5.1Q5.1 8.4 7.1 7.3Q8.5 6.5 8.5 5.2Q8.5 4 7 4Q5.4 4 5.4 5.9Z" fill="#333"/>
<rect x="5.1" y="12.8" width="3.5" height="3.3" fill="#333"/></svg>
<svg style="left:42px;top:324px" width="18" height="15" viewBox="0 0 18 15"><rect x="1.5" y="1.5" width="15" height="12" fill="#fff8c0" stroke="#111" stroke-width="1.3" stroke-dasharray="2 1"/>
<path d="M16.6 10.2V13.8H13Z" fill="#000"/></svg>
<svg style="left:42px;top:342px" width="18" height="20" viewBox="0 0 18 20"><circle cx="9" cy="9.4" r="7.4" fill="#fff" stroke="#666" stroke-width="2"/>
<path d="M8.6 4.5V9.4H12.3" fill="none" stroke="#111" stroke-width="1.4"/></svg>
</div>
<svg style="left:911px;top:756px" width="14" height="14" viewBox="0 0 14 14"><path d="M2.3 2.3L11.7 11.7M11.7 2.3L2.3 11.7" stroke="#575757" stroke-width="3.3" stroke-linecap="round"/></svg>
<svg style="left:1008px;top:754px" width="17" height="18" viewBox="0 0 17 18"><path d="M1 10.2L4 8.2L6.6 11.6L13.2 1L16 2.6L7 16.6H5.6Z" fill="#a6d24e" stroke="#6f9c22" stroke-width="0.9" stroke-linejoin="round"/></svg>
<svg style="left:576px;top:368px" width="4" height="12" viewBox="0 0 4 12"><path d="M1.5 1V11" stroke="#444" stroke-width="1.6"/><path d="M1.5 1.2H3M1.5 10.8H3" stroke="#555" stroke-width="1.2"/></svg>
</body></html>
